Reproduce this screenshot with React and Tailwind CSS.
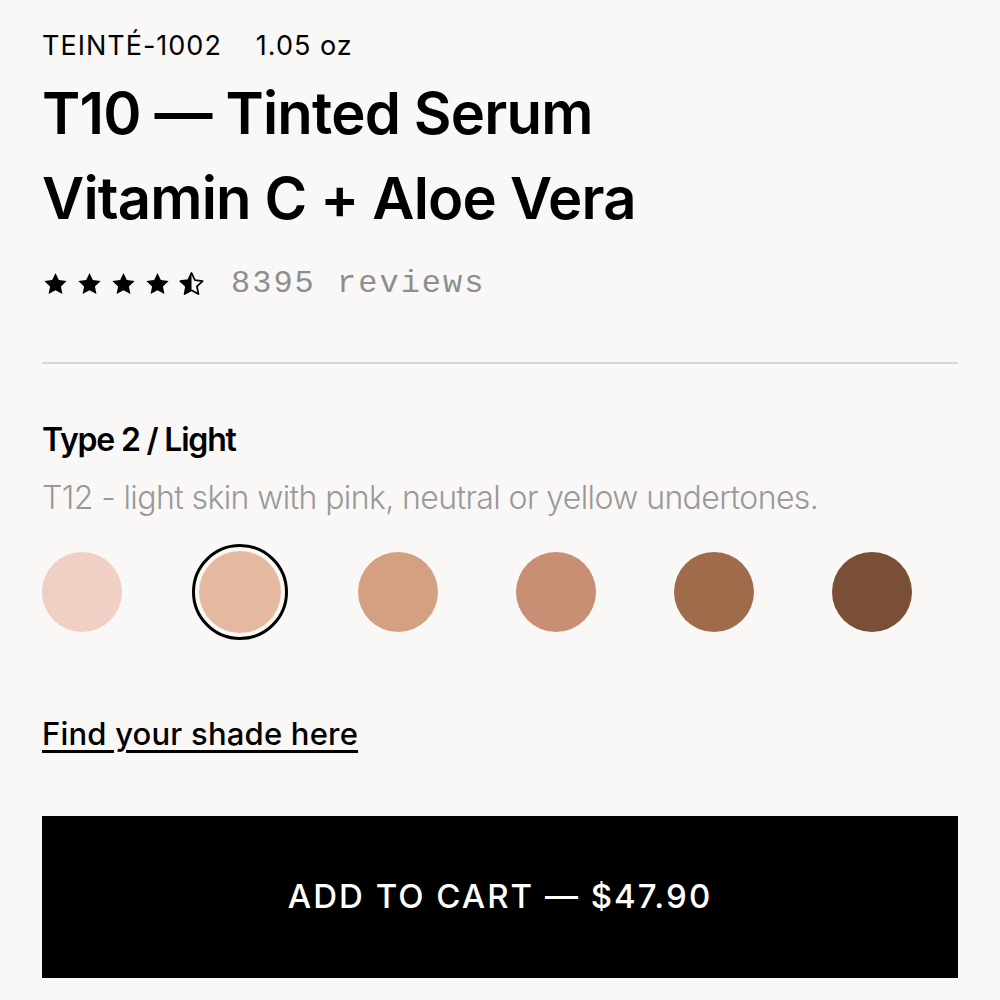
import React from "react";

const Star = ({ half }) => (
  <svg width="27" height="26" viewBox="0 0 24 24" className="shrink-0">
    {half ? (
      <>
        <defs>
          <clipPath id="lh">
            <rect x="0" y="0" width="12" height="24" />
          </clipPath>
        </defs>
        <path
          d="M12 1.8l3.1 6.6 7.2.9-5.3 4.9 1.4 7.1L12 17.8l-6.4 3.5L7 14.2 1.7 9.3l7.2-.9z"
          fill="none"
          stroke="#000"
          strokeWidth="1.6"
          strokeLinejoin="round"
        />
        <path
          d="M12 1.8l3.1 6.6 7.2.9-5.3 4.9 1.4 7.1L12 17.8l-6.4 3.5L7 14.2 1.7 9.3l7.2-.9z"
          fill="#000"
          clipPath="url(#lh)"
        />
      </>
    ) : (
      <path
        d="M12 1.8l3.1 6.6 7.2.9-5.3 4.9 1.4 7.1L12 17.8l-6.4 3.5L7 14.2 1.7 9.3l7.2-.9z"
        fill="#000"
      />
    )}
  </svg>
);

const swatches = ["#f0cfc5", "#e4b9a0", "#d3a081", "#c98f74", "#9f6b4b", "#7a4f37"];

export default function App() {
  return (
    <div
      className="min-h-[1000px] w-[1000px] bg-[#f9f8f7] px-[42px] pt-[28px] text-black"
      style={{ fontFamily: "Inter, 'Liberation Sans', sans-serif" }}
    >
      <div className="flex items-center gap-[34px] text-[27px] leading-[36px] tracking-[1px]">
        <span>TEINTÉ-1002</span>
        <span>1.05 oz</span>
      </div>
      <h1 className="mt-[7px] text-[58px] font-semibold leading-[85px] tracking-[-0.8px]">
        T10 — Tinted Serum
        <br />
        Vitamin C + Aloe Vera
      </h1>
      <div className="mt-[23px] flex items-center">
        <div className="flex gap-[7px]">
          <Star />
          <Star />
          <Star />
          <Star />
          <Star half />
        </div>
        <span
          className="ml-[26px] text-[32px] leading-[40px] tracking-[2px] text-[#8e8e8e]"
          style={{ fontFamily: "'Liberation Mono', monospace" }}
        >
          8395 reviews
        </span>
      </div>
      <div className="mt-[58px] h-[2px] w-full bg-[#d6d6d6]" />
      <div className="mt-[58px] text-[32px] font-semibold leading-[36px] tracking-[-1.2px]">
        Type 2 / Light
      </div>
      <div className="mt-[22px] text-[32px] font-light leading-[36px] tracking-[-0.6px] text-[#999999]">
        T12 - light skin with pink, neutral or yellow undertones.
      </div>
      <div className="mt-[28px] flex items-center gap-[78px]">
        {swatches.map((c, i) =>
          i === 1 ? (
            <div
              key={i}
              className="-mx-[8px] flex h-[96px] w-[96px] items-center justify-center rounded-full border-[3px] border-black"
            >
              <div className="h-[82px] w-[82px] rounded-full" style={{ backgroundColor: c }} />
            </div>
          ) : (
            <div key={i} className="h-[80px] w-[80px] rounded-full" style={{ backgroundColor: c }} />
          )
        )}
      </div>
      <div className="mt-[76px]">
        <a className="text-[31px] font-medium leading-[36px] tracking-[0.2px] underline decoration-[3px] underline-offset-[5px]">
          Find your shade here
        </a>
      </div>
      <button className="mt-[64px] flex h-[162px] w-full items-center justify-center bg-black text-[33px] font-medium tracking-[2px] text-white">
        ADD TO CART — $47.90
      </button>
    </div>
  );
}
